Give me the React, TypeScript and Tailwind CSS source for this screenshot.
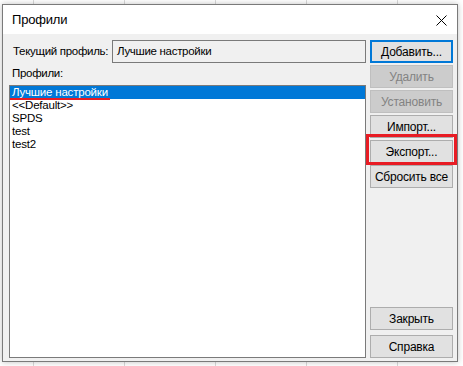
import React from "react";

const profiles = ["Лучшие настройки", "<<Default>>", "SPDS", "test", "test2"];

interface DlgButtonProps {
  label: string;
  disabled?: boolean;
  primary?: boolean;
  marked?: boolean;
}

const DlgButton: React.FC<DlgButtonProps> = ({ label, disabled, primary, marked }) => {
  let cls = "bg-[#e1e1e1] border border-[#adadad] text-black";
  if (disabled) cls = "bg-[#cccccc] border border-[#bfbfbf] text-[#838383]";
  if (primary) cls = "bg-[#e1e1e1] border-2 border-[#0078d7] text-black";
  return (
    <div className="relative">
      <button className={`h-[23px] w-full flex items-center justify-center text-[12px] leading-none tracking-[-0.2px] ${cls}`}>
        {label}
      </button>
      {marked && (
        <div className="absolute -left-[4px] -right-[4px] -top-[6px] -bottom-[2px] border-[3px] border-[#e81c24] pointer-events-none" />
      )}
    </div>
  );
};

export default function App() {
  return (
    <div
      className="w-[463px] h-[366px] overflow-hidden bg-white bg-[repeating-linear-gradient(90deg,transparent_0,transparent_33px,#d9d9d9_33px,#d9d9d9_34px,transparent_34px,transparent_91px)] pt-[4px] pl-[2px]"
      style={{ fontFamily: '"Liberation Sans", Arial, sans-serif' }}
    >
      <div className="w-[456px] h-[358px] border border-[#7a7a7a] bg-[#f0f0f0] shadow-[0_0_6px_rgba(0,0,0,0.25)] flex flex-col">
        {/* title bar */}
        <div className="h-[29px] bg-white flex items-center justify-between pl-[9px] pr-[10px] shrink-0">
          <span className="text-[13px] tracking-[-0.2px] text-black">Профили</span>
          <svg width="11" height="11" viewBox="0 0 11 11" className="mt-[1px]">
            <path d="M0.5 0.5 L10.5 10.5 M10.5 0.5 L0.5 10.5" stroke="#000" strokeWidth="1" />
          </svg>
        </div>

        {/* body */}
        <div className="flex-1 flex pl-[6px] pr-[4px] pt-[6px] pb-[3px] gap-[4px]">
          {/* left column */}
          <div className="w-[357px] flex flex-col">
            <div className="h-[23px] flex items-center">
              <span className="w-[103px] pl-[4px] whitespace-nowrap text-[11.5px] tracking-[-0.3px] text-black">
                Текущий профиль:
              </span>
              <div className="w-[254px] h-[23px] border border-[#7a7a7a] bg-[#f0f0f0] pl-[4px] flex items-center text-[11.5px] tracking-[-0.3px] text-black">
                Лучшие настройки
              </div>
            </div>
            <div className="h-[22px] flex items-center pl-[3px] text-[11.5px] tracking-[-0.3px] text-black">Профили:</div>
            <div className="flex-1 border border-[#7a7a7a] bg-white">
              {profiles.map((p, i) => (
                <div
                  key={p}
                  className={`h-[13px] flex items-center pl-[2px] text-[11.5px] leading-none tracking-[-0.2px] ${
                    i === 0 ? "bg-[#0078d7] text-white" : "text-black"
                  }`}
                >
                  <span className="relative">
                    {p}
                    {i === 0 && (
                      <span className="absolute -left-[2px] -right-[2px] -bottom-[2px] h-[2px] bg-[#e81c24]" />
                    )}
                  </span>
                </div>
              ))}
            </div>
          </div>

          {/* right column */}
          <div className="w-[83px] flex flex-col gap-[2px]">
            <DlgButton label="Добавить..." primary />
            <DlgButton label="Удалить" disabled />
            <DlgButton label="Установить" disabled />
            <DlgButton label="Импорт..." />
            <DlgButton label="Экспорт..." marked />
            <DlgButton label="Сбросить все" />
            <div className="mt-auto flex flex-col gap-[5px]">
              <DlgButton label="Закрыть" />
              <DlgButton label="Справка" />
            </div>
          </div>
        </div>
      </div>
    </div>
  );
}
